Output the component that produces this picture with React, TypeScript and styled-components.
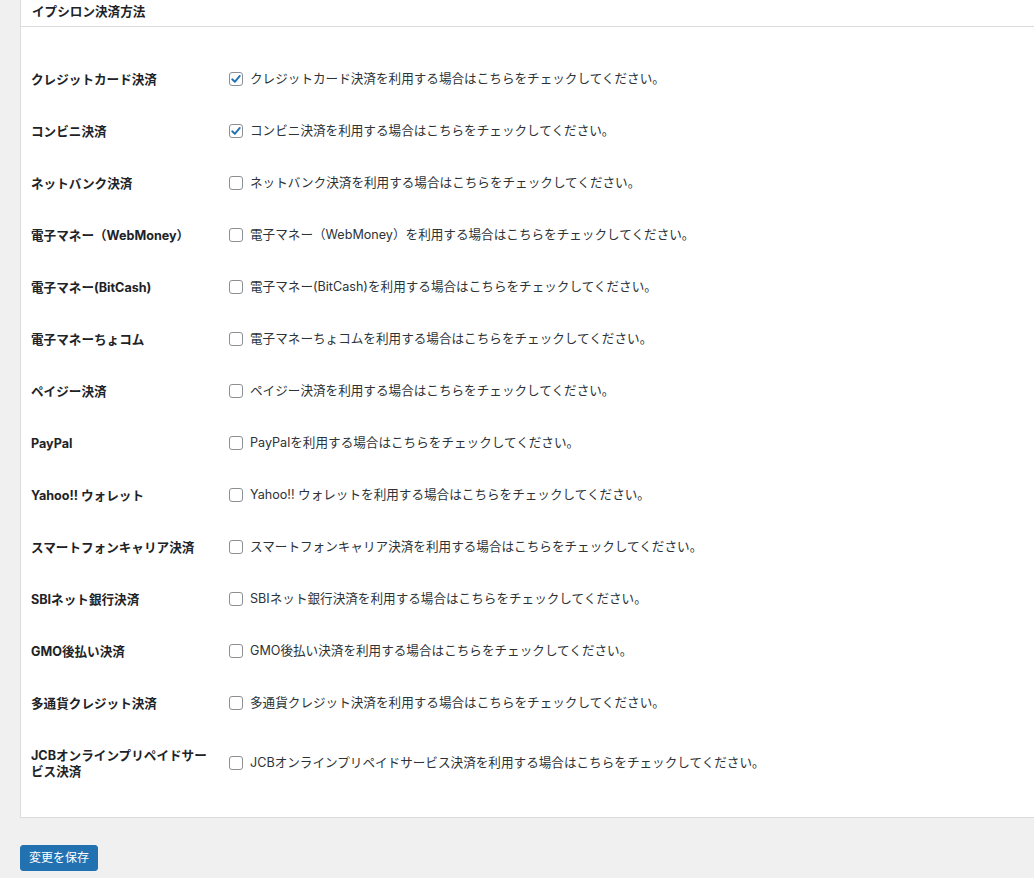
import React from "react";
import styled, { createGlobalStyle } from "styled-components";

const GlobalStyle = createGlobalStyle`
  html, body {
    margin: 0;
    padding: 0;
    background: #f0f0f1;
  }
  body {
    font-family: Inter, "Noto Sans CJK JP", sans-serif;
    color: #1d2327;
    overflow: hidden;
  }
`;

interface Method {
  label: string;
  name: string;
  checked?: boolean;
}

const methods: Method[] = [
  { label: "クレジットカード決済", name: "クレジットカード決済", checked: true },
  { label: "コンビニ決済", name: "コンビニ決済", checked: true },
  { label: "ネットバンク決済", name: "ネットバンク決済" },
  { label: "電子マネー（WebMoney）", name: "電子マネー（WebMoney）" },
  { label: "電子マネー(BitCash)", name: "電子マネー(BitCash)" },
  { label: "電子マネーちょコム", name: "電子マネーちょコム" },
  { label: "ペイジー決済", name: "ペイジー決済" },
  { label: "PayPal", name: "PayPal" },
  { label: "Yahoo!! ウォレット", name: "Yahoo!! ウォレット" },
  { label: "スマートフォンキャリア決済", name: "スマートフォンキャリア決済" },
  { label: "SBIネット銀行決済", name: "SBIネット銀行決済" },
  { label: "GMO後払い決済", name: "GMO後払い決済" },
  { label: "多通貨クレジット決済", name: "多通貨クレジット決済" },
  { label: "JCBオンラインプリペイドサービス決済", name: "JCBオンラインプリペイドサービス決済" },
];

function Checkbox({ checked }: { checked?: boolean }) {
  return (
    <Box>
      {checked && (
        <svg width="12" height="12" viewBox="0 0 12 12">
          <path
            d="M2.2 6.3 L4.8 8.8 L9.8 2.9"
            fill="none"
            stroke="#2271b1"
            strokeWidth="1.9"
            strokeLinecap="round"
            strokeLinejoin="round"
          />
        </svg>
      )}
    </Box>
  );
}

export default function App() {
  const [state, setState] = React.useState(methods.map((m) => !!m.checked));

  const toggle = (i: number) => {
    setState((s) => s.map((v, j) => (j === i ? !v : v)));
  };

  return (
    <>
      <GlobalStyle />
      <Page>
        <Panel>
          <PanelTitle>イプシロン決済方法</PanelTitle>
          <Inside>
            <FormTable>
              <tbody>
                {methods.map((m, i) => (
                  <tr key={m.name}>
                    <Th>{m.label}</Th>
                    <Td>
                      <CheckLabel onClick={() => toggle(i)}>
                        <Checkbox checked={state[i]} />
                        {m.name}を利用する場合はこちらをチェックしてください。
                      </CheckLabel>
                    </Td>
                  </tr>
                ))}
              </tbody>
            </FormTable>
          </Inside>
        </Panel>
        <SaveButton>変更を保存</SaveButton>
      </Page>
    </>
  );
}

const Page = styled.div`
  padding-left: 20px;
  padding-bottom: 20px;
`;

const Panel = styled.div`
  background: #fff;
  border: 1px solid #dcdcde;
  border-top: none;
  border-right: none;
`;

const PanelTitle = styled.h2`
  margin: 0;
  padding: 4px 11px 6px;
  font-size: 12.6px;
  line-height: 16px;
  font-weight: 700;
  color: #1d2327;
  border-bottom: 1px solid #dcdcde;
`;

const Inside = styled.div`
  padding: 27px 10px 19px;
`;

const FormTable = styled.table`
  border-collapse: collapse;
  width: 100%;
`;

const Th = styled.th`
  width: 180px;
  padding: 18px 9px 18px 0;
  text-align: left;
  vertical-align: top;
  font-size: 12.6px;
  line-height: 16px;
  font-weight: 700;
  color: #1d2327;
`;

const Td = styled.td`
  padding: 13px 9px;
  vertical-align: middle;
  font-size: 12.6px;
  line-height: 16px;
  color: #2c3338;
`;

const CheckLabel = styled.label`
  display: inline-flex;
  align-items: center;
  cursor: pointer;
`;

const Box = styled.span`
  box-sizing: border-box;
  width: 14px;
  height: 14px;
  margin-right: 7px;
  border: 1px solid #8c8f94;
  border-radius: 3px;
  background: #fff;
  display: inline-flex;
  align-items: center;
  justify-content: center;
  flex: none;
`;

const SaveButton = styled.button`
  margin-top: 27px;
  height: 26px;
  padding: 0 8px;
  background: #2271b1;
  border: 1px solid #2271b1;
  border-radius: 3px;
  color: #fff;
  font-family: Inter, "Noto Sans CJK JP", sans-serif;
  font-size: 12px;
  line-height: 24px;
  cursor: pointer;
`;
